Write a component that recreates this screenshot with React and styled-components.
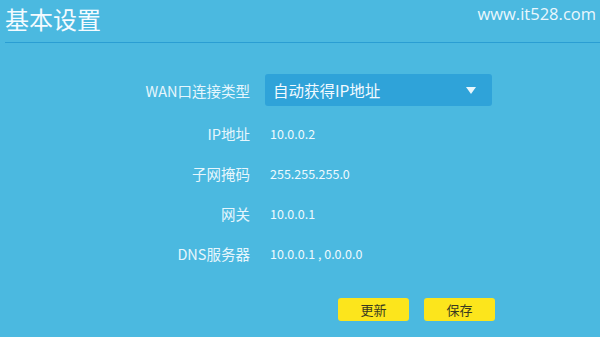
import styled, { createGlobalStyle } from 'styled-components'

const Global = createGlobalStyle`
  html, body { margin: 0; padding: 0; }
  body {
    width: 600px;
    height: 337px;
    overflow: hidden;
    background: #4bb9e0;
    font-family: "Microsoft YaHei", "Noto Sans CJK SC", "Liberation Sans", sans-serif;
  }
`

const Page = styled.div`
  width: 600px;
  height: 337px;
  background: #4bb9e0;
  color: #fff;
`

const Header = styled.header`
  display: flex;
  justify-content: space-between;
  align-items: flex-start;
  margin-left: 5px;
  height: 42px;
  border-bottom: 1px solid #2a9ed3;
`

const Title = styled.h1`
  margin: 4px 0 0;
  font-size: 24px;
  font-weight: 400;
  line-height: 30px;
  color: #f4fbff;
`

const Site = styled.span`
  margin: 3px 4px 0 0;
  font-family: "Open Sans", "Liberation Sans", sans-serif;
  font-size: 16.5px;
  line-height: 22px;
  color: #eaf7fd;
`

const Form = styled.div`
  display: grid;
  grid-template-columns: 250px 227px;
  column-gap: 15px;
  margin-top: 30px;
`

const Label = styled.div`
  height: ${p => p.$h || 40}px;
  display: flex;
  align-items: center;
  justify-content: flex-end;
  font-size: 14.5px;
  color: #e6f6fd;
`

const Value = styled.div`
  height: ${p => p.$h || 40}px;
  display: flex;
  align-items: center;
  padding-left: 5px;
  font-size: 12.5px;
  color: #eef9fe;
`

const Select = styled.div`
  height: 32px;
  margin-top: 1px;
  display: flex;
  align-items: center;
  justify-content: space-between;
  padding: 0 16px 0 8px;
  background: #2fa3d9;
  border-radius: 3px;
  font-size: 15.5px;
  color: #f2faff;
`

const Arrow = styled.span`
  width: 0;
  height: 0;
  border-left: 5px solid transparent;
  border-right: 5px solid transparent;
  border-top: 7px solid #e8f6fc;
`

const Spacer = styled.div`
  grid-column: 1 / -1;
  height: 6px;
`

const Actions = styled.div`
  display: flex;
  gap: 15px;
  margin: 25px 0 0 338px;
`

const Button = styled.button`
  width: 71px;
  height: 23px;
  border: none;
  border-radius: 3px;
  background: #fce51c;
  color: #3a3a20;
  font-family: inherit;
  font-size: 13px;
  padding: 0;
`

const rows = [
  ['IP地址', '10.0.0.2'],
  ['子网掩码', '255.255.255.0'],
  ['网关', '10.0.0.1'],
  ['DNS服务器', '10.0.0.1 , 0.0.0.0'],
]

export default function App() {
  return (
    <Page>
      <Global />
      <Header>
        <Title>基本设置</Title>
        <Site>www.it528.com</Site>
      </Header>
      <Form>
        <Label $h={34}>WAN口连接类型</Label>
        <Select>
          自动获得IP地址
          <Arrow />
        </Select>
        <Spacer />
        {rows.flatMap(([k, v]) => [
          <Label key={k}>{k}</Label>,
          <Value key={k + 'v'}>{v}</Value>,
        ])}
      </Form>
      <Actions>
        <Button>更新</Button>
        <Button>保存</Button>
      </Actions>
    </Page>
  )
}
